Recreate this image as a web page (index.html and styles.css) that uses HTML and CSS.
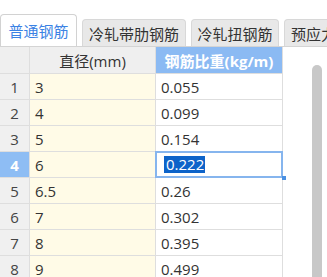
FILE: index.html
```html
<!DOCTYPE html>
<html lang="zh">
<head>
<meta charset="utf-8">
<title>钢筋比重</title>
<link rel="stylesheet" href="styles.css">
</head>
<body>
<div class="tabs">
  <div class="tab tab-active tab-1">普通钢筋</div>
  <div class="tab tab-2">冷轧带肋钢筋</div>
  <div class="tab tab-3">冷轧扭钢筋</div>
  <div class="tab tab-4">预应力钢筋</div>
</div>
<div class="sheet">
  <div class="grid">
    <div class="cell corner"></div>
    <div class="cell head">直径(mm)</div>
    <div class="cell head head-active">钢筋比重(kg/m)</div>

    <div class="cell num">1</div><div class="cell dia">3</div><div class="cell val">0.055</div>
    <div class="cell num">2</div><div class="cell dia">4</div><div class="cell val">0.099</div>
    <div class="cell num">3</div><div class="cell dia">5</div><div class="cell val">0.154</div>
    <div class="cell num num-sel">4</div><div class="cell dia">6</div><div class="cell val val-sel"><span class="sel-text">0.222</span></div>
    <div class="cell num">5</div><div class="cell dia">6.5</div><div class="cell val">0.26</div>
    <div class="cell num">6</div><div class="cell dia">7</div><div class="cell val">0.302</div>
    <div class="cell num">7</div><div class="cell dia">8</div><div class="cell val">0.395</div>
    <div class="cell num">8</div><div class="cell dia">9</div><div class="cell val">0.499</div>
    <div class="cell num">9</div><div class="cell dia">10</div><div class="cell val">0.617</div>
  </div>
  <div class="scroll">
    <div class="thumb"></div>
  </div>
</div>
</body>
</html>
```

FILE: styles.css
```css
html, body {
  margin: 0;
  padding: 0;
  background: #ffffff;
  overflow: hidden;
}

body {
  width: 327px;
  height: 277px;
  font-family: "Open Sans", "Noto Sans CJK SC", sans-serif;
  font-size: 15px;
  color: #333333;
}

.tabs {
  display: flex;
  align-items: flex-end;
  gap: 5px;
  padding-top: 14px;
  height: 32px;
  overflow: hidden;
  white-space: nowrap;
}

.tab {
  box-sizing: border-box;
  flex-shrink: 0;
  height: 27px;
  display: flex;
  align-items: center;
  justify-content: center;
  background: #e8e8e8;
  border: 1px solid #d8d8d8;
  border-bottom: none;
  border-radius: 4px 4px 0 0;
  font-family: "Noto Sans CJK SC", sans-serif;
  font-size: 15px;
  color: #333333;
}

.tab-active {
  height: 32px;
  background: #ffffff;
  border-color: #d2d2d2;
  color: #3b82e4;
}

.tab-1 { width: 77px; }
.tab-2 { width: 104px; }
.tab-3 { width: 88px; }
.tab-4 {
  justify-content: flex-start;
  padding-left: 6px;
  width: 90px;
}

.sheet {
  display: flex;
  border-top: 1px solid #d4d4d4;
  overflow: hidden;
  height: 240px;
}

.grid {
  display: grid;
  grid-template-columns: 29px 125px 126px;
  grid-template-rows: 26px;
  grid-auto-rows: 25px;
  gap: 1px;
  background: #dedede;
  border-right: 1px solid #dedede;
  flex-shrink: 0;
}

.cell {
  display: flex;
  align-items: center;
  padding-left: 5px;
  white-space: nowrap;
  font-size: 15px;
}

.corner {
  background: #efefef;
}

.head {
  background: #efefef;
  justify-content: center;
  padding-left: 0;
  color: #333333;
}

.head-active {
  background: #8bbaf3;
  color: #ffffff;
  font-weight: bold;
}

.num {
  background: #f0f0f0;
  justify-content: center;
  padding-left: 0;
  color: #444444;
}

.num-sel {
  background: #8ebdf4;
  color: #ffffff;
  font-weight: bold;
}

.dia {
  background: #fffbe7;
}

.val {
  background: #ffffff;
}

.val-sel {
  position: relative;
  z-index: 1;
  outline: 2px solid #86b5ee;
  outline-offset: -1px;
  padding-left: 8px;
}

.val-sel::after {
  content: "";
  position: absolute;
  right: -4px;
  bottom: -3px;
  width: 4px;
  height: 4px;
  background: #4a90e2;
}

.sel-text {
  background: #0d63c9;
  color: #ffffff;
  line-height: 17px;
  padding: 0 1px 0 2px;
}

.scroll {
  flex: 1;
  padding-top: 18px;
  padding-left: 29px;
  background: #ffffff;
}

.thumb {
  width: 10px;
  height: 300px;
  background: #c8c8c8;
  border-radius: 5px 5px 0 0;
}
```
